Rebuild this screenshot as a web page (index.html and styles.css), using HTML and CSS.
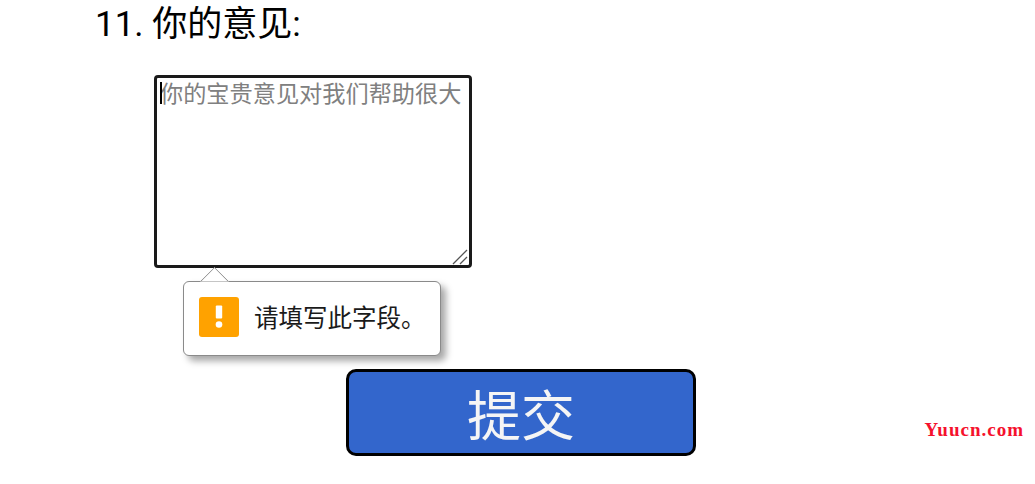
FILE: index.html
```html
<!DOCTYPE html>
<html lang="zh-CN">

<head>
    <meta charset="UTF-8">
    <meta name="viewport" content="width=device-width, initial-scale=1.0">
    <title>你的意见</title>
    <link rel="stylesheet" href="styles.css">
</head>

<body>
    <form class="survey">
        <h2 class="question">11. 你的意见:</h2>
        <div class="answer">
            <textarea class="answer-box" placeholder="你的宝贵意见对我们帮助很大"></textarea>
            <span class="caret"></span>
            <svg class="grip" width="16" height="16" viewBox="0 0 16 16">
                <path d="M1 15 L15 1 M8 15 L15 8" stroke="#555" stroke-width="1.3" fill="none" />
            </svg>
            <div class="bubble">
                <span class="bubble-arrow"></span>
                <span class="bubble-icon">
                    <svg width="40" height="40" viewBox="0 0 40 40">
                        <rect x="16.8" y="8.6" width="6.4" height="12.8" rx="1" fill="#fff" />
                        <circle cx="20" cy="27.5" r="3.3" fill="#fff" />
                    </svg>
                </span>
                <span class="bubble-text">请填写此字段。</span>
            </div>
        </div>
        <button type="button" class="btn-submit">提交</button>
    </form>
    <span class="watermark">Yuucn.com</span>
</body>

</html>
```

FILE: styles.css
```css
html,
body {
    margin: 0;
    height: 100%;
    overflow: hidden;
}

body {
    position: relative;
    background: #fff;
    color: #000;
    font-family: Roboto, "Noto Sans CJK SC", sans-serif;
}

.survey {
    display: flex;
    flex-direction: column;
    padding-top: 3px;
}

.question {
    margin: 0 0 0 95px;
    font-size: 35px;
    font-weight: 400;
    line-height: 44px;
}

.answer {
    position: relative;
    margin: 28px 0 0 154px;
    width: 318px;
    height: 193px;
}

.answer-box {
    display: block;
    box-sizing: border-box;
    width: 100%;
    height: 100%;
    padding: 0 3px;
    border: 3px solid #1a1a1a;
    border-radius: 4px;
    outline: none;
    font-family: "Noto Sans CJK SC", sans-serif;
    font-size: 23.2px;
    line-height: 29px;
    resize: none;
}

.answer-box::placeholder {
    color: #808080;
    opacity: 1;
}

.caret {
    position: absolute;
    left: 6px;
    top: 7px;
    width: 2px;
    height: 22px;
    background: #000;
}

.grip {
    position: absolute;
    right: 4px;
    bottom: 3px;
}

.bubble {
    position: absolute;
    left: 29px;
    top: 206px;
    display: flex;
    align-items: center;
    gap: 15px;
    box-sizing: border-box;
    width: 258px;
    height: 75px;
    padding: 0 0 4px 15px;
    background: #fff;
    border: 1px solid #8a8a8a;
    border-radius: 6px;
    box-shadow: 5px 5px 7px rgba(0, 0, 0, 0.35);
}

.bubble-arrow {
    position: absolute;
    left: 20px;
    top: -11px;
    width: 20px;
    height: 20px;
    background: #fff;
    border-top: 1px solid #8a8a8a;
    border-left: 1px solid #8a8a8a;
    clip-path: polygon(0 0, 100% 0, 0 100%);
    transform: rotate(45deg);
    transform-origin: center;
}

.bubble-icon {
    display: block;
    width: 40px;
    height: 40px;
    background: #ffa200;
    border-radius: 3px;
}

.bubble-text {
    font-size: 24.5px;
    color: #1a1a1a;
}

.btn-submit {
    align-self: flex-start;
    box-sizing: border-box;
    width: 350px;
    height: 87px;
    margin: 101px 0 0 346px;
    padding: 0;
    background: #3366cc;
    border: 3px solid #000;
    border-radius: 10px;
    color: #f5f5f5;
    font-family: "Noto Sans CJK SC", sans-serif;
    font-size: 54px;
}

.watermark {
    position: absolute;
    right: 11px;
    top: 419px;
    color: #f5112d;
    font-family: "Liberation Serif", serif;
    font-size: 19px;
    font-weight: 700;
    letter-spacing: 1px;
}
```
